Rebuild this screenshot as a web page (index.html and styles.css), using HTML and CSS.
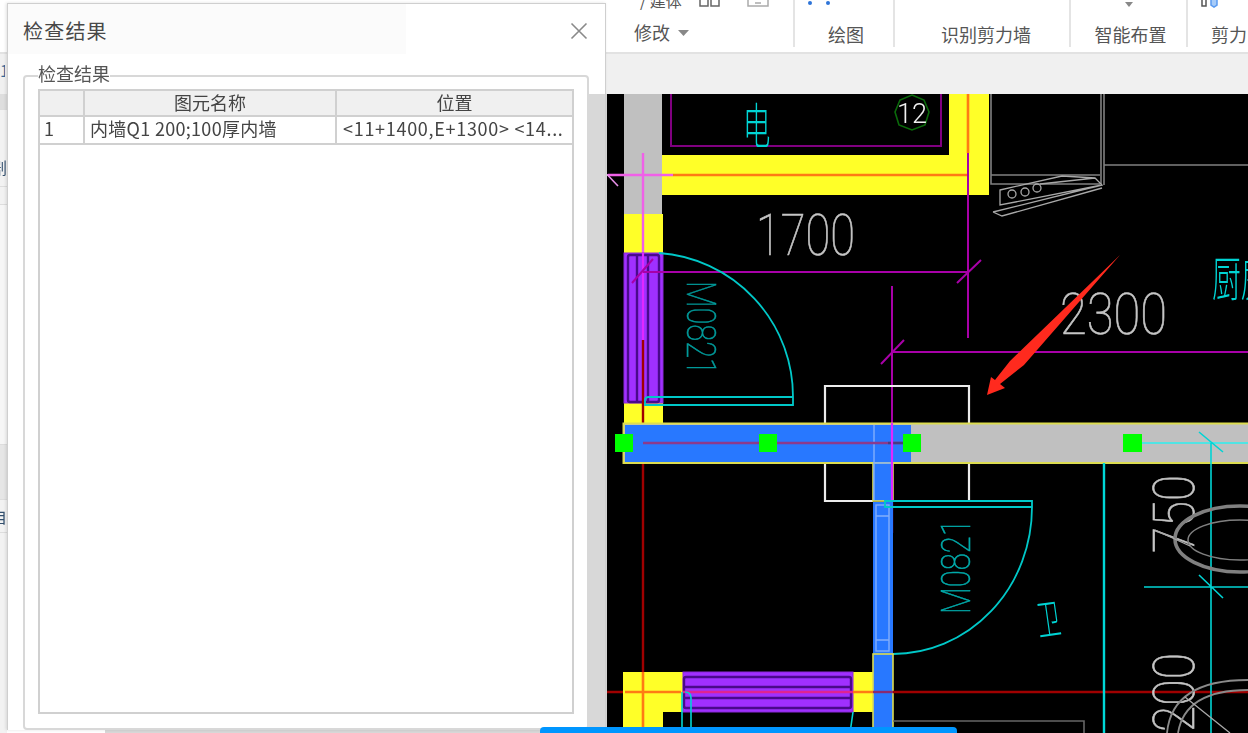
FILE: index.html
```html
<!DOCTYPE html>
<html lang="zh">
<head>
<meta charset="utf-8">
<title>检查结果</title>
<link rel="stylesheet" href="styles.css">
</head>
<body>
<div class="app">
  <header class="ribbon">
    <section class="group group-edit">
      <div class="tools tools-edit">
        <span class="cut-text">/ 建体</span>
        <svg class="tool-icon" width="22" height="8" viewBox="0 0 22 8"><path class="ico" d="M1 0v6h8V0M12 0v6h8V0"/></svg>
        <svg class="tool-icon tool-gap" width="22" height="8" viewBox="0 0 22 8"><path class="ico ico-light" d="M1 0v6h20V0M8 3h6"/></svg>
      </div>
      <div class="edit-label">修改 <svg class="caret" width="11" height="6" viewBox="0 0 11 6"><path class="caret-fill" d="M0 0h11L5.500 6z"/></svg></div>
    </section>
    <section class="group group-draw">
      <div class="tools"><svg width="24" height="8" viewBox="0 0 24 8"><circle class="dot" cx="3" cy="3" r="2"/><circle class="dot" cx="21" cy="3" r="2"/></svg></div>
      <div class="label">绘图</div>
    </section>
    <section class="group group-wall">
      <div class="tools"></div>
      <div class="label">识别剪力墙</div>
    </section>
    <section class="group group-smart">
      <div class="tools tools-center"><svg width="10" height="6" viewBox="0 0 10 6"><path class="caret-fill" d="M1 0h8L5 5z"/></svg></div>
      <div class="label">智能布置</div>
    </section>
    <section class="group group-shear">
      <div class="tools tools-shear"><svg width="20" height="8" viewBox="0 0 20 8"><path class="ico ico-dark" d="M2 0v6h4V0"/><path class="ico ico-blue" d="M11 0v5l3 2 3-2V0"/></svg></div>
      <div class="label">剪力</div>
    </section>
  </header>
  <div class="strip"><span class="edge-text strip-num">1</span></div>
  <div class="workspace">
    <aside class="rail">
      <div class="rail-row rail-a"></div>
      <div class="rail-row rail-b"><span class="edge-text">剧</span></div>
      <div class="rail-row rail-c"></div>
      <div class="rail-row rail-d"></div>
      <div class="rail-row rail-e"></div>
      <div class="rail-row rail-f"><span class="edge-text">自</span></div>
      <div class="rail-row rail-g"></div>
    </aside>
    <div class="under-dialog"></div>
    <main class="canvas">
      <svg class="cad" width="641" height="639" viewBox="607 94 641 639">
        <rect class="purple-line" x="671" y="80" width="270" height="66"/>
        <polygon class="yellow" points="662,155 949,155 949,94 989,94 989,195 662,195"/>
        <rect class="gray-wall" x="624" y="94" width="38" height="120"/>
        <rect class="yellow" x="624" y="214" width="39" height="39"/>
        <rect class="yellow" x="624" y="403" width="39" height="21"/>
        <path class="orange" d="M673 175H968M968 94V153"/>
        <path class="pink" d="M608 175H673M643 153V253"/>
        <path class="pink-tick" d="M598 165L618 186"/>

        <rect class="door-fill" x="624" y="253" width="39" height="150"/>
        <rect class="door-line" x="628" y="255" width="31" height="147" rx="2"/>
        <path class="door-line" d="M637 255V402M648 255V402"/>
        <path class="magenta-bright" d="M643 253V340"/>
        <path class="axis-red" d="M643 340V672M643 424V464"/>
        <path class="dim" d="M632 283L653 259M643 272H968M957 283L981 260M968 153V338M893 352H1248M881 364L904 340M892 286V423"/>
        <path class="cyan-line" d="M659 253A144 144 0 0 1 793 397V405H645V400Q645 397 649 397H793"/>
        <text class="cad-num cad-teal" transform="translate(687 281) rotate(90)" textLength="94" lengthAdjust="spacingAndGlyphs" font-size="40">M0821</text>

        <path class="white-line" d="M825 423V386H969V423M825 463V501H873M969 463V501H950"/>

        <rect class="gray-wall wall-outline" x="623.5" y="423.5" width="640" height="39.5"/>
        <rect class="blue" x="625" y="425" width="286" height="37"/>
        <rect class="blue wall-yellow" x="873" y="463" width="20" height="38"/>
        <path class="blue-light" d="M874 425V500M892 425V463M874 463H892"/>
        <path class="axis-blue" d="M643 443H905"/>
        <path class="axis-dark" d="M888 443H905"/>
        <path class="cyan-pale" d="M1142 443H1248"/>
        <path class="magenta-bright" d="M892 423V533"/>

        <rect class="blue" x="873" y="502" width="20" height="152"/>
        <rect class="blue-light" x="876" y="505" width="13" height="146"/>
        <path class="blue-light" d="M876 516H889M876 640H889"/>
        <path class="cyan-line" d="M1032 501H885V507H1032ZM1032 507A139 147 0 0 1 893 654"/>
        <text class="cad-num cad-teal2" transform="translate(970 614) rotate(-90)" textLength="95" lengthAdjust="spacingAndGlyphs" font-size="40">M0821</text>

        <polygon class="yellow" points="623,672 683,672 683,712 663,712 663,733 623,733"/>
        <rect class="yellow" x="853" y="672" width="21" height="40"/>
        <rect class="door-fill" x="683" y="672" width="170" height="40"/>
        <rect class="door-line" x="684" y="677" width="167" height="31" rx="2"/>
        <path class="door-line" d="M684 687H851M684 698H851"/>
        <rect class="blue wall-yellow" x="873" y="654" width="20" height="85"/>
        <path class="axis-red" d="M607 692H623M893 692H1248"/>
        <path class="orange" d="M625 692H681M643 672V733M853 692H873"/>
        <path class="axis-door" d="M683 692H853"/>
        <path class="axis-over-blue" d="M873 692H893"/>
        <path class="cyan-thin" d="M682 692V733M685 692Q691 692 691 698V733M853 712L850 733"/>

        <rect class="handle" x="615" y="434" width="18" height="18"/>
        <rect class="handle" x="759" y="434" width="18" height="18"/>
        <rect class="handle" x="903" y="434" width="18" height="18"/>
        <rect class="handle" x="1123" y="434" width="19" height="18"/>

        <path class="cyan-thick" d="M1104 463V733"/>
        <path class="cyan-thin" d="M1199 432L1223 452M1211 443V733M1144 587H1248M1199 575L1223 598"/>

        <polygon class="hept" points="912,95 924,100 929,112 925,125 912,130 899,125 895,112 900,100"/>
        <text class="cad-white" x="897" y="123" textLength="30" lengthAdjust="spacingAndGlyphs" font-size="28">12</text>
        <text class="cad-cjk" transform="translate(743 144) scale(.72 1.3)" font-size="38">电</text>

        <path class="gray-line" d="M991 94V184H1100M991 175H1100M1101 94V184M1104 94V185M1104 165H1248"/>
        <path class="gray-thin" d="M1000 190L1062 176L1095 178L1102 185L1000 205V190ZM993 212L1102 185M993 212L1002 216L1102 188M1040 184L1095 178"/>
        <circle class="gray-thin" cx="1012" cy="194" r="4"/>
        <circle class="gray-thin" cx="1025" cy="192" r="4"/>
        <circle class="gray-thin" cx="1037" cy="188" r="4"/>

        <text class="cad-num" x="756" y="255" textLength="99" lengthAdjust="spacingAndGlyphs" font-size="57">1700</text>
        <text class="cad-num" x="1060" y="334" textLength="107" lengthAdjust="spacingAndGlyphs" font-size="57">2300</text>
        <text class="cad-num" transform="translate(1194 553) rotate(-90)" textLength="78" lengthAdjust="spacingAndGlyphs" font-size="57">750</text>
        <text class="cad-num" transform="translate(1194 732) rotate(-90)" textLength="79" lengthAdjust="spacingAndGlyphs" font-size="57">200</text>
        <text class="cad-cjk" transform="translate(1212 296) scale(.72 1.2)" font-size="40">厨房</text>
        <text class="cad-cjk" transform="translate(1039 636) rotate(-8) scale(.62 1.1)" font-size="38">卫</text>

        <ellipse class="toilet-outer" cx="1240" cy="539" rx="65" ry="33"/>
        <ellipse class="toilet-inner" cx="1240" cy="540" rx="52" ry="20"/>
        <path class="gray-arc" d="M1167 733Q1172 680 1248 680M1178 733Q1185 690 1248 690"/>
        <path class="gray-thin" d="M1185 697L1230 733M1155 530L1190 546"/>
        <path class="gray-dark" d="M893 721H1084V733"/>

        <polygon class="arrow" points="1120,255 1024,365 1000,384 1005,388 987,395 991,377 995,380 1010,361"/>
      </svg>
    </main>
  </div>

  <div class="dialog">
    <div class="dialog-head">
      <h1 class="dialog-title">检查结果</h1>
      <svg class="close" width="18" height="18" viewBox="0 0 18 18"><path class="close-x" d="M1.500 1.500L16.500 16.500M16.500 1.500L1.500 16.500"/></svg>
    </div>
    <div class="groupbox">
      <div class="legend">检查结果</div>
      <div class="table-box">
        <table class="grid">
          <colgroup><col class="c-no"><col class="c-name"><col class="c-pos"></colgroup>
          <thead><tr><th></th><th>图元名称</th><th>位置</th></tr></thead>
          <tbody><tr><td>1</td><td>内墙Q1 200;100厚内墙</td><td class="pos">&lt;11+1400,E+1300&gt; &lt;14...</td></tr></tbody>
        </table>
      </div>
    </div>
  </div>
  <div class="taskbar-peek"></div>
</div>
</body>
</html>
```
FILE: styles.css
```css
* { box-sizing: border-box; }
html, body { margin: 0; padding: 0; height: 100%; overflow: hidden; background: #fff; }
.app {
  position: relative;
  width: 1248px;
  height: 733px;
  overflow: hidden;
  display: flex;
  flex-direction: column;
  font-family: "Noto Sans CJK SC", "Liberation Sans", sans-serif;
  color: #444;
  filter: blur(.4px);
}

/* ribbon */
.ribbon { display: flex; height: 54px; flex: none; background: #fff; border-bottom: 2px solid #e2e2e2; }
.group { display: flex; flex-direction: column; height: 47px; border-right: 2px solid #e4e4e4; }
.group-edit { width: 795px; padding-left: 634px; }
.group-draw { width: 100px; }
.group-wall { width: 176px; }
.group-smart { width: 117px; }
.group-shear { flex: 1; border-right: 0; }
.tools { height: 23px; display: flex; align-items: flex-start; overflow: hidden; padding-left: 12px; }
.tools-edit { padding-left: 6px; height: 21px; }
.tools-center { justify-content: center; padding: 2px 0 0 0; }
.tools-shear { padding-left: 12px; }
.cut-text { font-size: 16px; line-height: 16px; margin-top: -8px; color: #555; }
.tool-icon { margin-left: 17px; }
.tool-gap { margin-left: 26px; }
.ico { fill: none; stroke: #666; stroke-width: 1.5; }
.ico-light { stroke: #aaa; }
.ico-dark { stroke: #555; }
.ico-blue { stroke: #5b9bf0; fill: #a8ccf8; }
.dot { fill: #2e74d8; }
.edit-label { font-size: 18px; line-height: 23px; color: #555; display: flex; align-items: center; gap: 8px; }
.caret { margin-top: 1px; }
.caret-fill { fill: #888; }
.label { font-size: 18px; line-height: 25px; text-align: center; color: #555; padding-left: 4px; white-space: nowrap; }
.group-wall .label { padding-left: 8px; }
.group-shear .label { text-align: left; padding-left: 23px; }

/* strip */
.strip { height: 40px; flex: none; background: #f0f0f0; display: flex; align-items: center; padding-bottom: 8px; }

/* workspace */
.workspace { flex: 1; display: flex; min-height: 0; }
.rail { width: 7px; flex: none; display: flex; flex-direction: column; background: #f2f2f2; overflow: hidden; }
.rail-row { flex: none; display: flex; justify-content: flex-end; overflow: hidden; border-bottom: 1px solid #ddd; }
.rail-a { height: 16px; background: #dedede; }
.rail-b { height: 77px; align-items: flex-end; padding-bottom: 8px; }
.rail-c { height: 18px; }
.rail-d { height: 240px; background: #f6f6f6; }
.rail-e { height: 55px; background: #e6e6e6; }
.rail-f { height: 33px; align-items: center; }
.rail-g { flex: 1; border-bottom: 0; }
.edge-text { flex: none; width: 16px; font-size: 16px; line-height: 22px; color: #33506e; }
.strip-num { width: 5px; overflow: hidden; color: #3a6a9a; font-size: 16px; }
.under-dialog { width: 600px; flex: none; background: linear-gradient(90deg, #fff 98px, #d8d8d8 98px); }
.canvas { flex: 1; background: #000; overflow: hidden; }
.cad { display: block; }

/* cad shapes */
.yellow { fill: #ffff28; }
.gray-wall { fill: #c0c0c0; }
.wall-outline { stroke: #dcdc50; stroke-width: 2; }
.blue { fill: #2878ff; }
.wall-yellow { stroke: #dcdc50; stroke-width: 1.6; }
.blue-light { fill: none; stroke: #82aefc; stroke-width: 1.4; }
.purple-line { fill: none; stroke: #800080; stroke-width: 2; }
.door-fill { fill: #a030ff; stroke: #8a28d8; stroke-width: 1; }
.door-line { fill: none; stroke: #4a0a8c; stroke-width: 2.4; }
.orange { fill: none; stroke: #ff7a14; stroke-width: 2.6; }
.pink { fill: none; stroke: #f060e8; stroke-width: 2.4; }
.pink-tick { fill: none; stroke: #e890e8; stroke-width: 1.6; }
.magenta-bright { fill: none; stroke: #e028ff; stroke-width: 2.2; }
.axis-red { fill: none; stroke: #a00000; stroke-width: 2.4; }
.axis-door { fill: none; stroke: #e02490; stroke-width: 2.4; }
.axis-over-blue { fill: none; stroke: #8a2a70; stroke-width: 2.4; }
.axis-blue { fill: none; stroke: #8c3a8c; stroke-width: 2.4; }
.axis-dark { fill: none; stroke: #4a3a80; stroke-width: 2.4; }
.dim { fill: none; stroke: #a800a8; stroke-width: 2; }
.cyan-line { fill: none; stroke: #00c8c8; stroke-width: 1.8; }
.cyan-thin { fill: none; stroke: #00d4d4; stroke-width: 1.6; }
.cyan-thick { fill: none; stroke: #00d8d8; stroke-width: 2.4; }
.cyan-pale { fill: none; stroke: #50e4e4; stroke-width: 2.2; }
.white-line { fill: none; stroke: #ececec; stroke-width: 2.2; }
.handle { fill: #00ff00; }
.hept { fill: none; stroke: #0a6a0a; stroke-width: 1.6; }
.gray-line { fill: none; stroke: #808080; stroke-width: 1.6; }
.gray-thin { fill: none; stroke: #a8a8a8; stroke-width: 1.3; }
.gray-dark { fill: none; stroke: #666; stroke-width: 1.6; }
.gray-arc { fill: none; stroke: #8a8a8a; stroke-width: 1.8; }
.toilet-outer { fill: none; stroke: #808080; stroke-width: 3.6; }
.toilet-inner { fill: none; stroke: #808080; stroke-width: 1.5; }
.arrow { fill: #ff2a1e; }
.cad-num { font-family: Roboto, "Liberation Sans", sans-serif; font-weight: 100; fill: #c8c8c8; stroke: #c0c0c0; stroke-width: .7; }
.cad-teal { fill: #009a9a; stroke: #009a9a; stroke-width: .6; }
.cad-teal2 { fill: #00aaaa; stroke: #00aaaa; stroke-width: .6; }
.cad-white { font-family: Roboto, "Liberation Sans", sans-serif; font-weight: 300; fill: #f0f0f0; }
.cad-cjk { font-family: "Noto Sans CJK SC", sans-serif; font-weight: 300; fill: #00d4d4; }

/* dialog */
.dialog {
  position: absolute;
  left: 7px;
  top: 3px;
  width: 599px;
  height: 727px;
  background: linear-gradient(#d8d8d8, #d8d8d8) right bottom / 16px 636px no-repeat, #fff;
  border: 1px solid #cfcfcf;
  border-width: 1px 1px 0 1px;
  box-shadow: -1px 0 3px rgba(0,0,0,.12);
  display: flex;
  flex-direction: column;
}
.dialog-head { height: 71px; flex: none; display: flex; justify-content: space-between; align-items: flex-start; padding: 14px 17px 0 15px; background: linear-gradient(#fbfbfb, #fbfbfb) 0 0 / 398px 50px no-repeat; }
.dialog-title { margin: 0; font-size: 20px; line-height: 26px; font-weight: 400; color: #484848; letter-spacing: 1.2px; }
.close { margin-top: 4px; }
.close-x { fill: none; stroke: #8a8a8a; stroke-width: 1.6; }
.groupbox { flex: 1; margin: 0 16px 0 15px; background: #fff; border: 2px solid #d8d8d8; border-radius: 4px; padding: 0 14px 14px 13px; display: flex; flex-direction: column; }
.legend { align-self: flex-start; height: 17px; margin-top: -12px; font-size: 18px; line-height: 17px; color: #555; background: #fff; }
.table-box { flex: 1; margin-top: 7px; border: 2px solid #d0d0d0; border-top-width: 0; margin-right: -1px; }
.grid { width: 100%; table-layout: fixed; border-collapse: collapse; font-size: 18px; color: #444; }
.c-no { width: 44px; }
.c-name { width: 252px; }
.grid th, .grid td { border: 2px solid #d0d0d0; padding: 0 5px 2px; white-space: nowrap; overflow: hidden; font-weight: 400; line-height: 22px; }
.grid th { height: 26px; background: #f0f0f0; text-align: center; }
.grid td { height: 27px; letter-spacing: .3px; padding-bottom: 4px; }
.grid tr > :first-child { border-left: 0; padding-left: 4px; }
.grid tr > :last-child { border-right: 0; }
.grid td.pos { padding-left: 6px; letter-spacing: .7px; }

.taskbar-peek { position: absolute; left: 540px; bottom: 0; width: 417px; height: 6px; background: #0096ff; border-radius: 4px 4px 0 0; }
```
